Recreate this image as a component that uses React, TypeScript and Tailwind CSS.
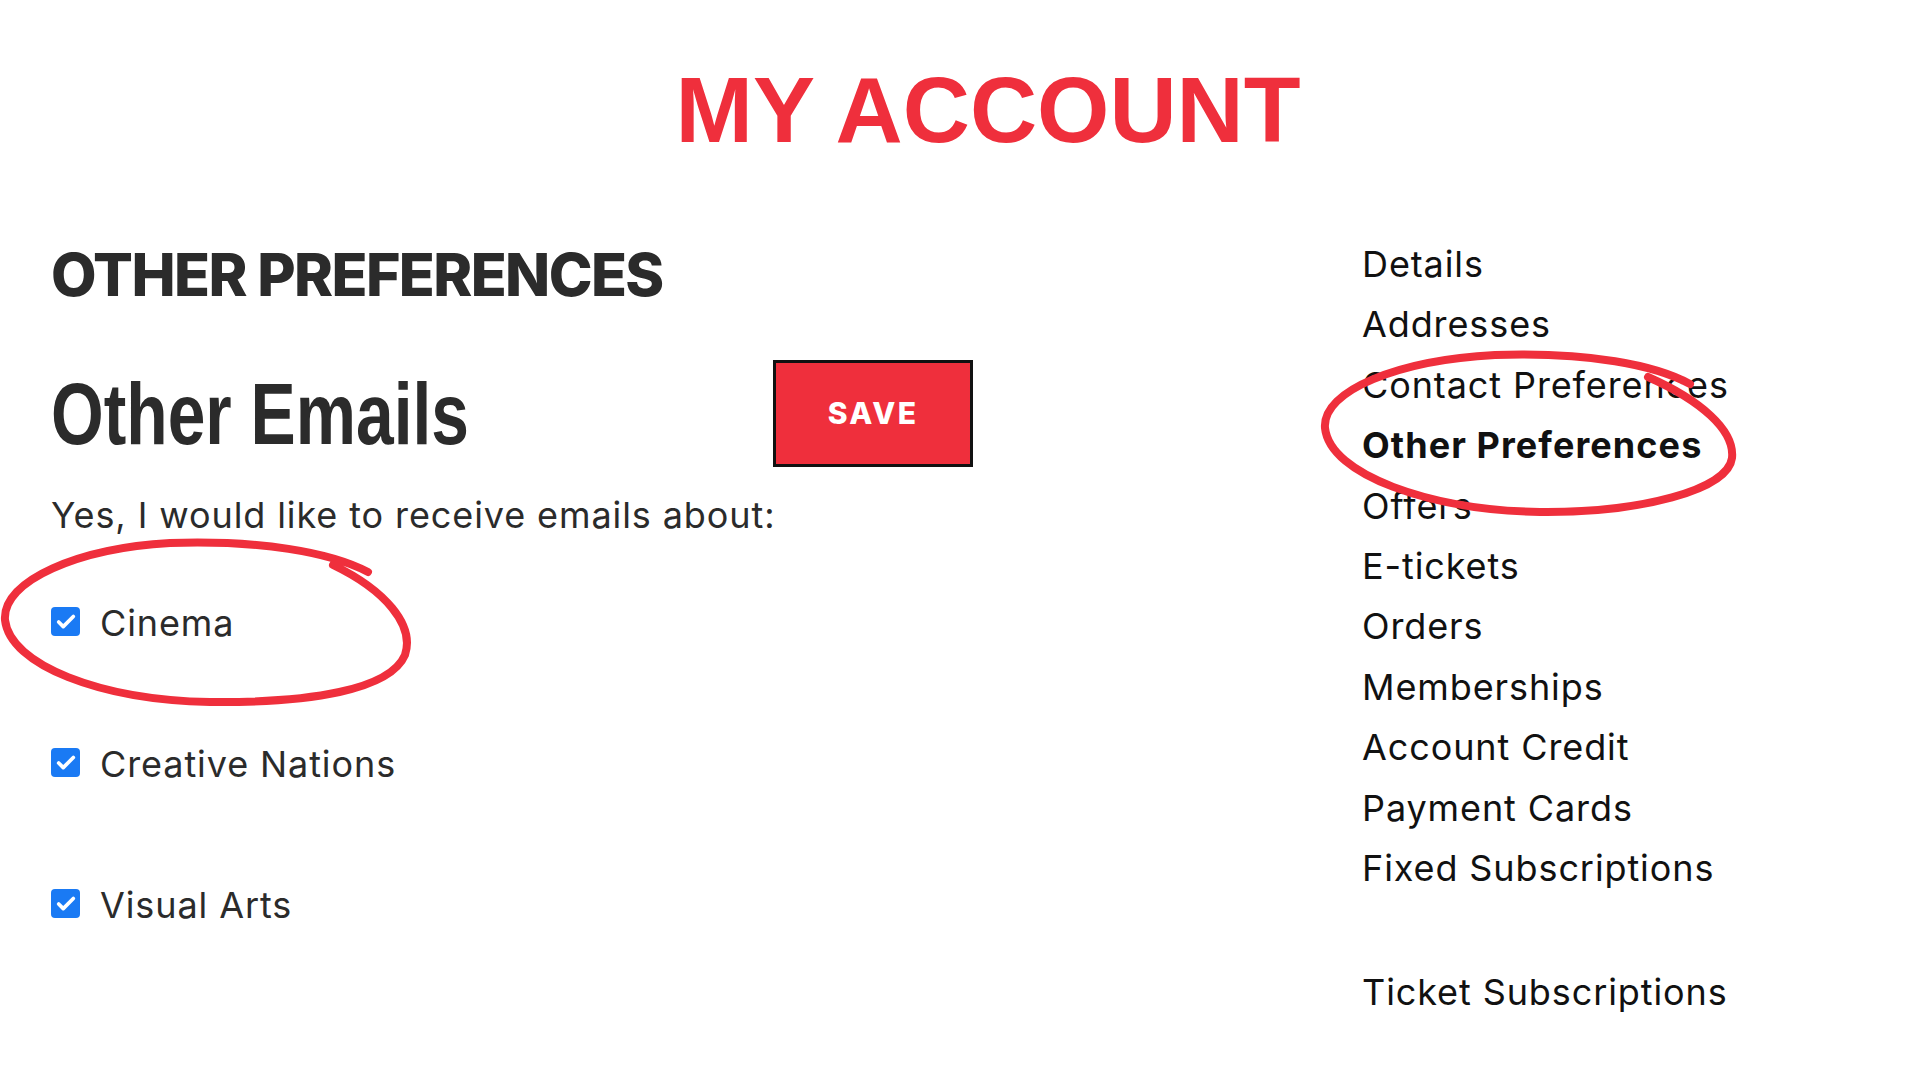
import { Check } from "lucide-react";

const navItems = [
  "Details",
  "Addresses",
  "Contact Preferences",
  "Other Preferences",
  "Offers",
  "E-tickets",
  "Orders",
  "Memberships",
  "Account Credit",
  "Payment Cards",
  "Fixed Subscriptions",
  "",
  "Ticket Subscriptions",
];

const topics = ["Cinema", "Creative Nations", "Visual Arts"];

function Tick() {
  return (
    <span className="flex h-[29px] w-[29px] shrink-0 items-center justify-center rounded-[4px] bg-[#1a7af4]">
      <Check size={22} strokeWidth={4} className="text-white" />
    </span>
  );
}

export default function App() {
  return (
    <div className="relative h-[1080px] w-[1920px] overflow-hidden bg-white font-['Inter',sans-serif]">
      <h1 className="pl-[56px] pt-[64px] text-center font-['Liberation_Sans',Arial,sans-serif] text-[93px] font-bold leading-[93px] text-[#ef2f3c]">
        MY ACCOUNT
      </h1>

      <div className="flex">
        <section className="w-[1362px] pl-[51px] text-[#2b2b2b]">
          <h2 className="mt-[88px] text-[59px] font-extrabold leading-[59px] tracking-[-0.027em]">
            OTHER PREFERENCES
          </h2>

          <div className="mt-[56px] flex w-[922px] items-center justify-between">
            <h3 className="inline-block origin-left scale-x-[0.77] font-['Liberation_Sans',Arial,sans-serif] text-[88px] font-bold leading-[88px]">
              Other Emails
            </h3>
            <button className="flex h-[107px] w-[200px] items-center justify-center border-[3px] border-[#111] bg-[#ef2f3c] text-[30px] font-extrabold tracking-[0.08em] text-white">
              SAVE
            </button>
          </div>

          <p className="mt-[31px] text-[36px] leading-[35px] tracking-[0.025em]">
            Yes, I would like to receive emails about:
          </p>

          <ul className="mt-[73px] flex flex-col gap-[106px]">
            {topics.map((t) => (
              <li key={t} className="flex h-[35px] items-start gap-[20px]">
                <span className="mt-[1px]">
                  <Tick />
                </span>
                <span className="text-[36px] leading-[35px] tracking-[0.025em]">{t}</span>
              </li>
            ))}
          </ul>
        </section>

        <nav className="mt-[77px] whitespace-nowrap text-[36px] leading-[60.4px] tracking-[0.025em] text-[#111]">
          {navItems.map((n, i) =>
            n === "" ? (
              <div key={i} className="h-[64px]" />
            ) : (
              <div
                key={i}
                className={n === "Other Preferences" ? "h-[60.4px] font-bold tracking-[0.03em]" : "h-[60.4px]"}
              >
                {n}
              </div>
            )
          )}
        </nav>
      </div>

      <svg
        className="pointer-events-none absolute inset-0"
        width="1920"
        height="1080"
        viewBox="0 0 1920 1080"
        fill="none"
        stroke="#ef2f3c"
        strokeWidth="8"
        strokeLinecap="round"
      >
        <path d="M 333 565 C 385 590, 415 625, 405 655 C 390 690, 310 703, 210 702 C 100 700, 10 665, 5 620 C 2 580, 80 548, 170 543 C 260 540, 330 552, 368 572" />
        <path d="M 1648 377 C 1700 400, 1735 430, 1732 458 C 1728 490, 1640 513, 1540 512 C 1430 510, 1330 475, 1325 428 C 1322 390, 1400 360, 1495 355 C 1590 352, 1655 365, 1690 384" />
      </svg>
    </div>
  );
}
